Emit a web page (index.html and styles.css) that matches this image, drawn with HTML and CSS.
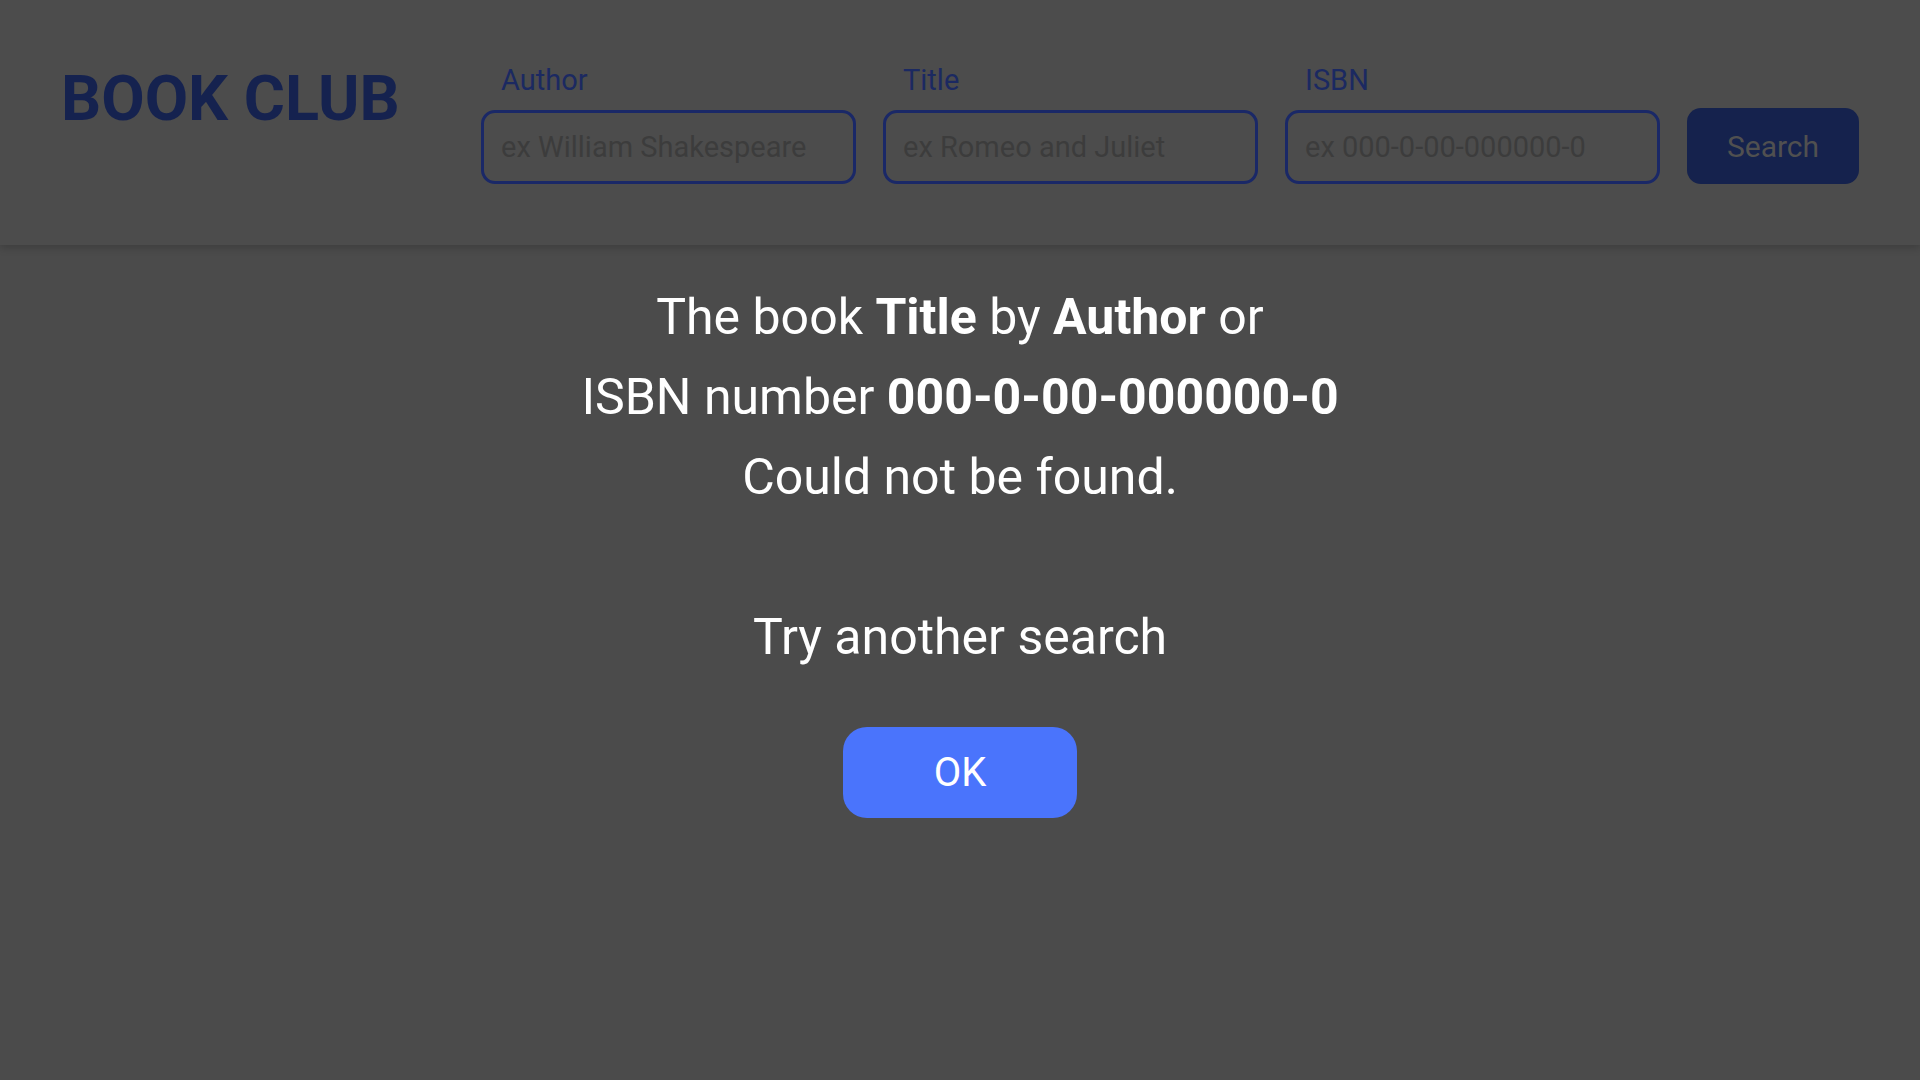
FILE: index.html
```html
<!DOCTYPE html>
<html lang="en">
<head>
<meta charset="utf-8">
<title>Book Club</title>
<link rel="stylesheet" href="styles.css">
</head>
<body>
<header class="topbar">
  <h1 class="brand">BOOK CLUB</h1>
  <form class="search">
    <label class="field">
      <span class="field-label">Author</span>
      <input class="field-input" type="text" placeholder="ex William Shakespeare">
    </label>
    <label class="field">
      <span class="field-label">Title</span>
      <input class="field-input" type="text" placeholder="ex Romeo and Juliet">
    </label>
    <label class="field">
      <span class="field-label">ISBN</span>
      <input class="field-input" type="text" placeholder="ex 000-0-00-000000-0">
    </label>
    <button class="search-btn" type="button">Search</button>
  </form>
</header>
<main class="notice">
  <p class="notice-text">The book <strong>Title</strong> by <strong>Author</strong> or<br>ISBN number <strong>000-0-00-000000-0</strong><br>Could not be found.<br><br>Try another search</p>
  <button class="ok-btn" type="button">OK</button>
</main>
</body>
</html>
```
FILE: styles.css
```css
html, body {
  margin: 0;
  padding: 0;
}
body {
  background: #4b4b4b;
  font-family: Roboto, "Liberation Sans", sans-serif;
  height: 1080px;
  overflow: hidden;
}
.topbar {
  display: flex;
  align-items: flex-start;
  justify-content: space-between;
  height: 245px;
  box-sizing: border-box;
  padding: 62px 61px 0 61px;
  background: #4c4c4c;
  box-shadow: 0 3px 8px rgba(0, 0, 0, 0.18);
  position: relative;
}
.brand {
  margin: 0;
  font-size: 63px;
  font-weight: 700;
  color: #15224f;
  line-height: normal;
}
.search {
  display: flex;
  align-items: flex-end;
  gap: 27px;
  padding-top: 1px;
}
.field {
  display: flex;
  flex-direction: column;
  width: 375px;
}
.field-label {
  font-size: 29px;
  font-weight: 400;
  color: #1b2961;
  padding-left: 20px;
  margin-bottom: 13px;
  line-height: normal;
}
.field-input {
  box-sizing: border-box;
  width: 375px;
  height: 74px;
  border: 3px solid #1a2867;
  border-radius: 14px;
  background: transparent;
  padding: 0 17px;
  font-family: Roboto, "Liberation Sans", sans-serif;
  font-size: 29px;
  font-weight: 400;
  color: #3c3c3c;
  outline: none;
}
.field-input::placeholder {
  color: #3c3c3c;
  opacity: 1;
}
.search-btn {
  width: 172px;
  height: 76px;
  border: none;
  border-radius: 14px;
  background: #15224d;
  color: #505050;
  font-family: Roboto, "Liberation Sans", sans-serif;
  font-size: 30px;
  font-weight: 400;
}
.notice {
  display: flex;
  flex-direction: column;
  align-items: center;
  padding-top: 32px;
}
.notice-text {
  margin: 0;
  font-size: 50px;
  line-height: 80px;
  color: #ffffff;
  text-align: center;
}
.notice-text strong {
  font-weight: 700;
}
.ok-btn {
  margin-top: 50px;
  width: 234px;
  height: 91px;
  border: none;
  border-radius: 24px;
  background: #4a74fc;
  color: #ffffff;
  font-family: Roboto, "Liberation Sans", sans-serif;
  font-size: 40px;
  font-weight: 400;
}
```
